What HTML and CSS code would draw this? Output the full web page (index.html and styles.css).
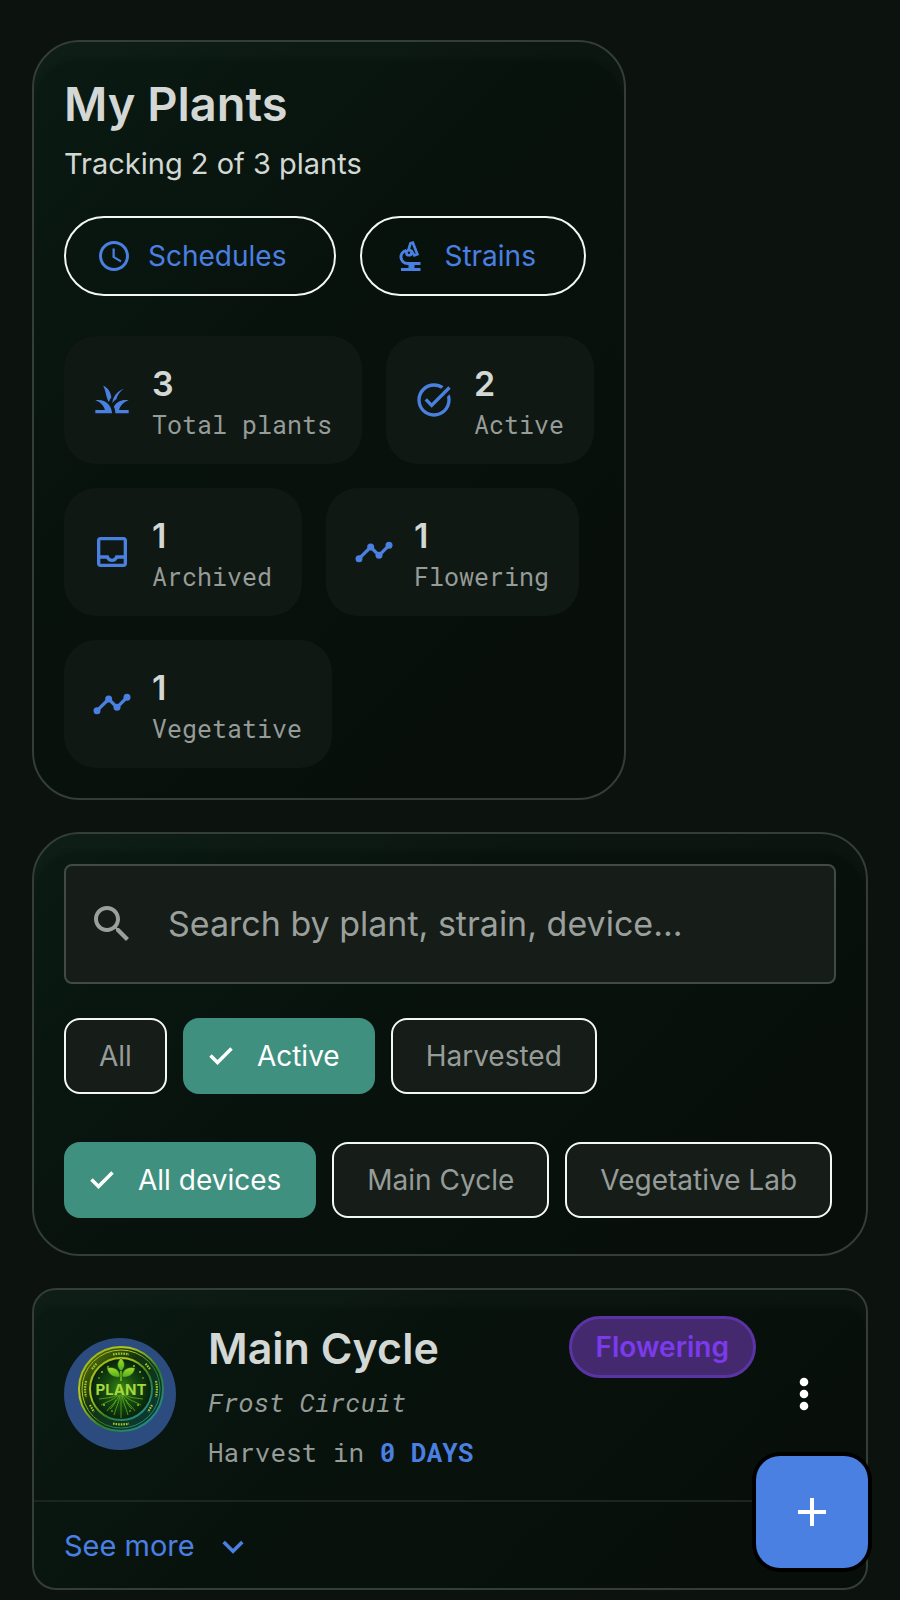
FILE: index.html
```html
<!DOCTYPE html>
<html lang="en">
<head>
<meta charset="utf-8">
<meta name="viewport" content="width=device-width, initial-scale=1">
<title>My Plants</title>
<link rel="stylesheet" href="styles.css">
</head>
<body>
<main class="page">
  <section class="card overview">
    <h1 class="overview-title">My Plants</h1>
    <p class="overview-sub">Tracking 2 of 3 plants</p>
    <div class="actions">
      <button class="pill" type="button">
        <svg class="icon-md" viewBox="0 0 24 24" aria-hidden="true"><path fill="currentColor" d="M11.99 2C6.47 2 2 6.48 2 12s4.47 10 9.99 10C17.52 22 22 17.52 22 12S17.52 2 11.99 2zM12 20c-4.42 0-8-3.58-8-8s3.58-8 8-8 8 3.580 8 8-3.580 8-8 8zm.5-13H11v6l5.250 3.150.75-1.230-4.500-2.670z"/></svg>
        Schedules
      </button>
      <button class="pill" type="button">
        <svg class="icon-md" viewBox="0 0 24 24" aria-hidden="true"><g fill="none" stroke="currentColor" stroke-width="1.800"><path d="M11 8 12.300 3.600l1.600-.5 3 7.700-2 .8-2.200-3.500"/><circle cx="11.300" cy="9.800" r="1.700"/><path stroke-width="2" d="M9.600 8.300C4.300 9.600 5 17 10.500 17H19"/></g><path fill="currentColor" d="M11 17h4v3h4v2H6v-2h5z"/></svg>
        Strains
      </button>
    </div>
    <ul class="stats">
      <li class="stat">
        <svg class="icon-lg" viewBox="0 0 24 24" aria-hidden="true"><path fill="currentColor" d="M12 20H2v-2h5.750C7.020 15.190 4.810 12.990 2 12.260 2.640 12.100 3.310 12 4 12c4.420 0 8 3.580 8 8zM22 12.260C21.360 12.100 20.690 12 20 12c-2.930 0-5.480 1.580-6.880 3.930.29.660.53 1.350.67 2.070.130.650.2 1.320.2 2H22v-2h-5.750c.73-2.810 2.940-5.010 5.750-5.740zM12.200 14c.3-4.100 3.100-7.500 6.900-8.700-2.500 1.700-4 4.200-4.500 6.200-1 .5-1.800 1.400-2.400 2.500zM10.100 13.200C8.300 10.500 8.600 7.100 6.700 3.500c3 1.200 4.600 3.900 4.900 7-.6.8-1.100 1.700-1.500 2.700z"/></svg>
        <div><strong class="stat-value">3</strong><span class="stat-label">Total plants</span></div>
      </li>
      <li class="stat">
        <svg class="icon-lg" viewBox="0 0 24 24" aria-hidden="true"><path fill="currentColor" d="M22 5.180 10.590 16.600l-4.240-4.240 1.410-1.410 2.830 2.830 10-10L22 5.180zM12 20c-4.410 0-8-3.590-8-8s3.590-8 8-8c1.570 0 3.040.46 4.280 1.250l1.450-1.450C16.100 2.670 14.130 2 12 2 6.480 2 2 6.480 2 12s4.480 10 10 10 10-4.480 10-10c0-1.190-.22-2.330-.6-3.390L19.790 10.220c.13.57.210 1.170.210 1.780 0 4.410-3.590 8-8 8z"/></svg>
        <div><strong class="stat-value">2</strong><span class="stat-label">Active</span></div>
      </li>
      <li class="stat">
        <svg class="icon-lg" viewBox="0 0 24 24" aria-hidden="true"><path fill="currentColor" d="M19 3H5c-1.100 0-2 .9-2 2v14c0 1.100.9 2 2 2h14c1.100 0 2-.9 2-2V5c0-1.100-.9-2-2-2zm0 16H5v-3h3.560c.69 1.190 1.970 2 3.450 2s2.750-.81 3.450-2H19v3zm0-5h-4.990c0 1.100-.9 2-2 2s-2-.9-2-2H5V5h14v9z"/></svg>
        <div><strong class="stat-value">1</strong><span class="stat-label">Archived</span></div>
      </li>
      <li class="stat">
        <svg class="icon-lg" viewBox="0 0 24 24" aria-hidden="true"><g fill="currentColor"><circle cx="3" cy="16" r="2.100"/><circle cx="10" cy="9" r="2.100"/><circle cx="15" cy="14" r="2.100"/><circle cx="21" cy="8" r="2.100"/></g><path fill="none" stroke="currentColor" stroke-width="2" d="m3 16 7-7 5 5 6-6"/></svg>
        <div><strong class="stat-value">1</strong><span class="stat-label">Flowering</span></div>
      </li>
      <li class="stat">
        <svg class="icon-lg" viewBox="0 0 24 24" aria-hidden="true"><g fill="currentColor"><circle cx="3" cy="16" r="2.100"/><circle cx="10" cy="9" r="2.100"/><circle cx="15" cy="14" r="2.100"/><circle cx="21" cy="8" r="2.100"/></g><path fill="none" stroke="currentColor" stroke-width="2" d="m3 16 7-7 5 5 6-6"/></svg>
        <div><strong class="stat-value">1</strong><span class="stat-label">Vegetative</span></div>
      </li>
    </ul>
  </section>

  <section class="card filters">
    <label class="search">
      <svg class="icon-xl" viewBox="0 0 24 24" aria-hidden="true"><path fill="currentColor" d="M15.500 14h-.79l-.28-.27C15.410 12.590 16 11.110 16 9.500 16 5.910 13.090 3 9.500 3S3 5.910 3 9.500 5.910 16 9.500 16c1.610 0 3.090-.59 4.230-1.570l.27.280v.79l5 4.990L20.490 19l-4.990-5zm-6 0C7.010 14 5 11.990 5 9.500S7.010 5 9.500 5 14 7.010 14 9.500 11.990 14 9.500 14z"/></svg>
      <input class="search-input" type="text" aria-label="Search plants" placeholder="Search by plant, strain, device...">
    </label>
    <div class="chips" role="group" aria-label="Status">
      <button class="chip" type="button">All</button>
      <button class="chip chip-on" type="button" aria-pressed="true">
        <svg class="icon-sm" viewBox="0 0 24 24" aria-hidden="true"><path fill="none" stroke="currentColor" stroke-width="3" d="m3 11.500 6 6L21 5.500"/></svg>
        Active
      </button>
      <button class="chip" type="button">Harvested</button>
    </div>
    <div class="chips" role="group" aria-label="Device">
      <button class="chip chip-on" type="button" aria-pressed="true">
        <svg class="icon-sm" viewBox="0 0 24 24" aria-hidden="true"><path fill="none" stroke="currentColor" stroke-width="3" d="m3 11.500 6 6L21 5.500"/></svg>
        All devices
      </button>
      <button class="chip" type="button">Main Cycle</button>
      <button class="chip" type="button">Vegetative Lab</button>
    </div>
  </section>

  <article class="card plant">
    <div class="plant-body">
      <svg class="avatar" viewBox="0 0 112 112" role="img" aria-label="Plant badge">
        <defs>
          <linearGradient id="rim" x1="0" y1="0" x2="1" y2="1"><stop offset="0" stop-color="#8fae12"/><stop offset=".3" stop-color="#b5c81c"/><stop offset=".6" stop-color="#2f7d2a"/><stop offset="1" stop-color="#1f8fae"/></linearGradient>
          <linearGradient id="band" x1="0" y1="0" x2="1" y2="1"><stop offset="0" stop-color="#6b8208"/><stop offset=".4" stop-color="#12330f"/><stop offset="1" stop-color="#0a3a3a"/></linearGradient>
          <radialGradient id="core"><stop offset="0" stop-color="#3c8a12"/><stop offset=".5" stop-color="#164a10"/><stop offset="1" stop-color="#06200c"/></radialGradient>
          <linearGradient id="leaf" x1="0" y1="0" x2="0" y2="1"><stop offset="0" stop-color="#a4dc2a"/><stop offset="1" stop-color="#4fae1e"/></linearGradient>
        </defs>
        <circle cx="56" cy="56" r="56" fill="#2c4c80"/>
        <circle cx="57" cy="51" r="42" fill="url(#band)" stroke="url(#rim)" stroke-width="2"/>
        <circle cx="57" cy="51" r="39" fill="none" stroke="url(#rim)" stroke-width="1"/>
        <g fill="none" stroke="#a5c926" stroke-width="2.200" stroke-dasharray="1.600 1">
          <path d="M49 16.500a36 36 0 0 1 16 0M49 85.500a36 36 0 0 0 16 0M22 43a36 36 0 0 0 0 16M92 43a36 36 0 0 1 0 16M26 67l4 7M88 67l-4 7M28 31l5-6M86 31l-5-6"/>
        </g>
        <circle cx="57" cy="51" r="31" fill="url(#core)" stroke="url(#rim)" stroke-width="2"/>
        <g fill="none" stroke="#6cbf22" stroke-width=".8" opacity=".85">
          <path d="M57 56v24M56 57c-1 8-4 12-6 20M58 57c1 8 4 12 6 20M55 57c-2 7-8 10-12 16M59 57c2 7 8 10 12 16M54 57c-4 5-10 6-17 10M60 57c4 5 10 6 17 10M53 57c-5 3-11 3-18 4M61 57c5 3 11 3 18 4M52 62c-2 4-3 7-6 9M62 62c2 4 3 7 6 9"/>
        </g>
        <g fill="#8cc820"><circle cx="38" cy="34" r="1"/><circle cx="44" cy="29" r="1"/><circle cx="76" cy="34" r="1"/><circle cx="70" cy="28" r="1"/><circle cx="35" cy="40" r=".8"/><circle cx="79" cy="40" r=".8"/><circle cx="40" cy="67" r="1"/><circle cx="74" cy="67" r="1"/><circle cx="48" cy="73" r=".8"/><circle cx="66" cy="73" r=".8"/></g>
        <path d="M57 43V33" stroke="#7fc523" stroke-width="1.500"/>
        <g fill="url(#leaf)" stroke="#1c4d10" stroke-width=".5">
          <path d="M57 33c-5-4-4-9 0-13 4 4 5 9 0 13z"/>
          <path d="M56 39c-7 1-12-3-13-9 7-2 13 2 13 9z"/>
          <path d="M58 39c7 1 12-3 13-9-7-2-13 2-13 9z"/>
        </g>
        <text class="coin-text" x="57" y="57" text-anchor="middle">PLANT</text>
      </svg>
      <div class="plant-info">
        <h2 class="plant-name">Main Cycle</h2>
        <p class="plant-strain">Frost Circuit</p>
        <p class="plant-harvest">Harvest in <b class="days">0 DAYS</b></p>
      </div>
      <span class="badge">Flowering</span>
      <button class="more" type="button" aria-label="Plant options">
        <svg class="icon-xl" viewBox="0 0 48 48" aria-hidden="true"><g fill="currentColor"><circle cx="24" cy="12" r="4.300"/><circle cx="24" cy="24" r="4.300"/><circle cx="24" cy="36" r="4.300"/></g></svg>
      </button>
    </div>
    <div class="plant-foot">
      <button class="see-more" type="button">
        See more
        <svg class="icon-sm" viewBox="0 0 24 24" aria-hidden="true"><path fill="none" stroke="currentColor" stroke-width="3" d="m4 8.500 8 8 8-8"/></svg>
      </button>
    </div>
  </article>
</main>
<button class="fab" type="button" aria-label="Add plant">
  <svg class="icon-xl" viewBox="0 0 48 48" aria-hidden="true"><path fill="none" stroke="currentColor" stroke-width="4" d="M24 10v28M10 24h28"/></svg>
</button>
</body>
</html>
```
FILE: styles.css
```css
* { box-sizing: border-box; }

body {
  margin: 0;
  min-height: 100vh;
  background: #0c130f;
  color: #d3d8d5;
  font-family: Inter, "Liberation Sans", sans-serif;
  font-size: 28px;
  line-height: 40px;
}

h1, h2, p, ul { margin: 0; padding: 0; }
button { font: inherit; cursor: pointer; }
svg { flex: none; display: block; }

.icon-sm { width: 28px; height: 28px; }
.icon-md { width: 36px; height: 36px; }
.icon-lg { width: 40px; height: 40px; }
.icon-xl { width: 48px; height: 48px; }

.page {
  display: flex;
  flex-direction: column;
  gap: 32px;
  padding: 40px 32px 10px;
}

.card {
  border: 2px solid #343d38;
  border-radius: 48px;
  padding: 30px;
  background: linear-gradient(135deg, #0a1a13 0%, #08120d 40%, #080e0a 100%);
  box-shadow: inset 0 18px 4px rgba(255, 255, 255, 0.02);
}

.overview { width: 100%; max-width: 594px; padding-right: 24px; }
.overview-title { font-size: 47px; line-height: 64px; font-weight: 600; }
.overview-sub { margin-top: 8px; font-size: 29px; }

.actions { display: flex; flex-wrap: wrap; gap: 24px; margin-top: 32px; }
.pill {
  display: flex;
  align-items: center;
  gap: 16px;
  height: 80px;
  padding: 0 48px 0 30px;
  border: 2px solid #f4f8f5;
  border-radius: 40px;
  background: transparent;
  color: #4a80e2;
}

.stats {
  display: flex;
  flex-wrap: wrap;
  gap: 24px;
  margin-top: 40px;
  list-style: none;
}
.stat {
  display: flex;
  align-items: center;
  gap: 20px;
  padding: 23px 30px 23px 28px;
  border-radius: 32px;
  background: #101813;
  color: #4a80e2;
}
.stat-value {
  display: block;
  color: #d3d8d5;
  font-size: 34px;
  line-height: 50px;
  font-weight: 600;
}
.stat-label, .plant-strain, .plant-harvest {
  display: block;
  color: #969c98;
  font-family: "Roboto Mono", "DejaVu Sans Mono", monospace;
  font-size: 25px;
  line-height: 32px;
}

.search {
  display: flex;
  align-items: center;
  gap: 32px;
  height: 120px;
  padding: 0 22px;
  border: 2px solid #414a45;
  border-radius: 8px;
  background: #161c18;
  color: #9ba09d;
}
.search-input {
  flex: 1;
  min-width: 0;
  padding: 0;
  border: 0;
  outline: 0;
  background: transparent;
  color: #d3d8d5;
  font: inherit;
  font-size: 34px;
  line-height: 48px;
}
.search-input::placeholder { color: #9ba09d; opacity: 1; }

.filters { padding-bottom: 36px; }
.chips { display: flex; flex-wrap: wrap; gap: 16px; margin-top: 34px; }
.chips + .chips { margin-top: 48px; }
.chip {
  display: flex;
  align-items: center;
  gap: 22px;
  height: 76px;
  padding: 0 33px;
  border: 2px solid #f4f8f5;
  border-radius: 16px;
  background: #161c18;
  color: #969c98;
}
.chip-on {
  padding-left: 22px;
  border-color: #40907f;
  background: #40907f;
  color: #fff;
}

.plant { padding: 0; border-radius: 24px; }
.plant-body {
  display: flex;
  align-items: center;
  gap: 16px;
  padding: 30px 30px 32px;
}
.avatar { width: 112px; height: 112px; margin-right: 16px; }
.coin-text {
  fill: #a6d83c;
  font-family: Inter, "Liberation Sans", sans-serif;
  font-size: 15px;
  font-weight: 700;
}
.plant-info { flex: 1; min-width: 0; }
.plant-name { font-size: 43px; line-height: 56px; font-weight: 600; }
.plant-strain, .plant-harvest { font-size: 26px; }
.plant-strain { margin-top: 10px; font-style: italic; }
.plant-harvest { margin-top: 18px; }
.days { color: #4a80e2; font-weight: 700; }

.badge {
  align-self: flex-start;
  margin-top: -4px;
  padding: 8px 24px;
  border: 3px solid #5a33a4;
  border-radius: 31px;
  background: #44296e;
  color: #7c3aed;
  font-weight: 600;
}
.more {
  display: flex;
  justify-content: center;
  width: 64px;
  padding: 8px 0;
  border: 0;
  background: transparent;
  color: #fff;
}

.plant-foot {
  padding: 24px 30px 22px;
  border-top: 2px solid #1c2520;
}
.see-more {
  display: flex;
  align-items: center;
  gap: 24px;
  padding: 0;
  border: 0;
  background: transparent;
  color: #4a80e2;
  font-size: 29px;
}

.fab {
  position: fixed;
  right: 32px;
  bottom: 32px;
  display: flex;
  align-items: center;
  justify-content: center;
  width: 112px;
  height: 112px;
  border: 0;
  border-radius: 24px;
  background: #4a80e2;
  color: #fff;
  box-shadow: 0 0 0 4px #000;
}
```
